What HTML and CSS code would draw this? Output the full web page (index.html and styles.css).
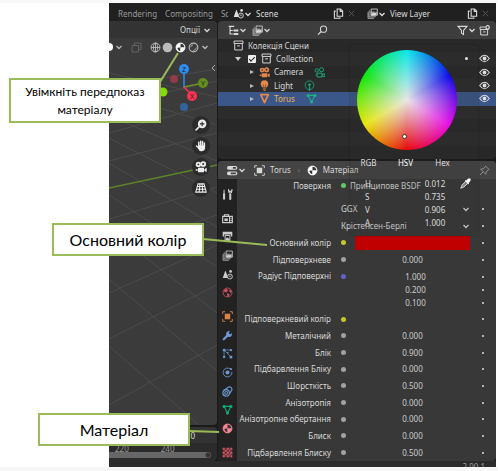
FILE: index.html
```html
<!DOCTYPE html>
<html lang="uk">
<head>
<meta charset="utf-8">
<title>Матеріал</title>
<link rel="stylesheet" href="styles.css">
</head>
<body>
<svg class="sprite" aria-hidden="true">
  <symbol id="chev" viewBox="0 0 8 8"><path d="M1.5 3 4 5.5 6.5 3" fill="none" stroke="currentColor" stroke-width="1.3"/></symbol>
  <symbol id="copy" viewBox="0 0 16 16"><path d="M6 1.5h5l3 3V12H6zM10.5 1.5V5H14M4 4.500H2V15h8v-1.500" fill="none" stroke="currentColor" stroke-width="1.600"/></symbol>
  <symbol id="cross" viewBox="0 0 16 16"><path d="M4 4l8 8M12 4l-8 8" fill="none" stroke="currentColor" stroke-width="1.400"/></symbol>
  <symbol id="scene" viewBox="0 0 16 16"><path d="M5 2 9 13H1z" fill="currentColor"/><circle cx="11.500" cy="11" r="3.600" fill="#303030" stroke="currentColor" stroke-width="1.300"/><circle cx="12.500" cy="3.500" r="2" fill="currentColor"/><path d="M10 10.500h3" stroke="currentColor"/></symbol>
  <symbol id="layers" viewBox="0 0 16 16"><path d="M6 1.500h9v9H6z" fill="none" stroke="currentColor" stroke-width="1.200"/><path d="M4 4H3v9h9v-1" fill="none" stroke="currentColor"/><path d="M1.500 6v9H10" fill="none" stroke="currentColor"/><path d="M5 5h7v7H5z" fill="currentColor" opacity=".55"/><path d="M6 10l3-4 2 2 3-3v5z" fill="currentColor"/></symbol>
  <symbol id="tree" viewBox="0 0 16 16"><path d="M1 2h8M3 3v10h4M3 8h4" fill="none" stroke="currentColor" stroke-width="1.600"/><path d="M8 8h7M8 13h7" stroke="currentColor" stroke-width="3"/></symbol>
  <symbol id="search" viewBox="0 0 16 16"><circle cx="9.500" cy="6" r="4.500" fill="none" stroke="currentColor" stroke-width="1.500"/><path d="M6 9.500 1.500 14" stroke="currentColor" stroke-width="1.800"/></symbol>
  <symbol id="filter" viewBox="0 0 16 16"><path d="M1.500 2h13L9.500 8v6L6.500 12V8z" fill="none" stroke="currentColor" stroke-width="1.500"/></symbol>
  <symbol id="box" viewBox="0 0 16 16"><path d="M1.500 1.500h13v3.500h-13zM2.500 5v9.500h11V5M6 8.500h4" fill="none" stroke="currentColor" stroke-width="1.400"/></symbol>
  <symbol id="newbox" viewBox="0 0 16 16"><path d="M9 3H1.500v3.500H14M2.500 6.500v8h10v-8M6 10h3.500" fill="none" stroke="currentColor" stroke-width="1.400"/><circle cx="12.500" cy="3.500" r="2.500" fill="none" stroke="currentColor" stroke-width="1.800"/></symbol>
  <symbol id="camera" viewBox="0 0 16 16"><circle cx="4.500" cy="4.500" r="3.500" fill="currentColor"/><circle cx="11" cy="4" r="3.800" fill="currentColor"/><circle cx="4.500" cy="4.500" r="1.200" fill="#333"/><circle cx="11" cy="4" r="1.400" fill="#333"/><path d="M4 9h8v6H4zM12.500 11 15.500 9v6l-3-2zM3.500 11H1v2h2.500z" fill="currentColor"/></symbol>
  <symbol id="camdata" viewBox="0 0 16 16"><circle cx="4" cy="5" r="2.500" fill="none" stroke="currentColor" stroke-width="1.300"/><circle cx="11" cy="4" r="3" fill="none" stroke="currentColor" stroke-width="1.300"/><path d="M4.500 9h7v5.500h-7zM11.500 11 15 9.500v5L11.500 13M4.500 11.500H2" fill="none" stroke="currentColor" stroke-width="1.300"/></symbol>
  <symbol id="bulb" viewBox="0 0 16 16"><path d="M8 0.500a5.500 5.500 0 0 0-5.500 5.500c0 2 1.500 3 2.500 5h6c1-2 2.500-3 2.500-5A5.500 5.500 0 0 0 8 .5z" fill="currentColor"/><path d="M5.500 12.200h5v1.400h-5zM6.500 14.300h3v1.400h-3z" fill="currentColor"/><path d="M6 6.500 7 11M10 6.500 9 11" stroke="#333" stroke-width=".8"/></symbol>
  <symbol id="lightdata" viewBox="0 0 16 16"><circle cx="8" cy="7.500" r="6.300" fill="none" stroke="currentColor" stroke-width="1.100"/><circle cx="8" cy="7" r="1.800" fill="currentColor"/><path d="M8 9v7" stroke="currentColor" stroke-width="1.300"/></symbol>
  <symbol id="tri" viewBox="0 0 16 16"><path d="M2.500 2.500h11L8 14z" fill="none" stroke="currentColor" stroke-width="2.600" stroke-linejoin="round"/></symbol>
  <symbol id="mesh" viewBox="0 0 16 16"><path d="M3 3.500h10L8 13.500z" fill="none" stroke="currentColor" stroke-width="1.600"/><circle cx="3" cy="3.500" r="2.200" fill="currentColor"/><circle cx="13" cy="3.500" r="2.200" fill="currentColor"/><circle cx="8" cy="13" r="2.200" fill="currentColor"/></symbol>
  <symbol id="eye" viewBox="0 0 16 16"><path d="M1 8q7-9.500 14 0-7 9.500-14 0z" fill="none" stroke="currentColor" stroke-width="1.500"/><circle cx="8" cy="8" r="2.800" fill="currentColor"/></symbol>
  <symbol id="props" viewBox="0 0 16 16"><rect x="0" y="1.500" width="15" height="5.500" rx="2.500" fill="currentColor"/><rect x="0" y="9.500" width="15" height="5.500" rx="2.500" fill="currentColor"/><path d="M8.500 3h4.500v2.500H8.500zM5.500 11H13v2.500H5.500z" fill="#444"/></symbol>
  <symbol id="object" viewBox="0 0 16 16"><path d="M4 4h8v8H4z" fill="currentColor"/><path d="M1 4.500V1h3.500M11.500 1H15v3.500M15 11.500V15h-3.500M4.500 15H1v-3.500" fill="none" stroke="currentColor" stroke-width="1.300"/></symbol>
  <symbol id="material" viewBox="0 0 16 16"><circle cx="8" cy="8" r="6.500" fill="currentColor" stroke="currentColor" stroke-width="1.200"/><path d="M8 2.500A5.500 5.500 0 0 1 13.500 8H8zM3.500 8.500 8 8v5.500A5.500 5.500 0 0 1 3.500 8.500z" fill="#333"/><path d="M8 8h5.500A5.500 5.500 0 0 1 8 13.500z" fill="currentColor"/></symbol>
  <symbol id="pin" viewBox="0 0 16 16"><path d="M9.500 1.500 14.500 6.500 13 7 10.500 10.500 10 13.500 2.500 6 6 5.500 9 3zM6 10 1.500 14.500" fill="none" stroke="currentColor" stroke-width="1.300"/></symbol>
  <symbol id="dropper" viewBox="0 0 16 16"><path d="M10 2.500q3-3.500 5-1.500t-1.500 5l-1 1 .8.800-1.500 1.500-5-5L8.300 2.800l.8.800z" fill="currentColor"/><path d="M7.500 5.500 3 10l-2 5 5-2 4.500-4.500" fill="#888" stroke="currentColor" stroke-width="1"/></symbol>
  <symbol id="tool" viewBox="0 0 16 16"><path d="M3 1v7M12 8V6Q9 5 9.500 1L11 3.500h2L14.500 1Q15 5 12 6" fill="none" stroke="currentColor" stroke-width="1.500"/><path d="M3 7.500V14M12 8v6.500" stroke="currentColor" stroke-width="3" stroke-linecap="round"/></symbol>
  <symbol id="render" viewBox="0 0 16 16"><path d="M1 5h10v9H1zM11 5h4v9h-4M3.500 5V2.500h6V5" fill="none" stroke="currentColor" stroke-width="1.700"/><path d="M3.500 8h5v3.500h-5zM12 7.500h3v1h-3zM12 10.500h3v1h-3z" fill="currentColor"/></symbol>
  <symbol id="output" viewBox="0 0 16 16"><path d="M1 1h14v7h-2V5H3v3H1z" fill="currentColor"/><path d="M4.500 6.500h7V14h-7z" fill="none" stroke="currentColor" stroke-width="1.400"/><path d="M5 12l2.500-3 2 2 1.500-1v3H5z" fill="currentColor"/></symbol>
  <symbol id="world" viewBox="0 0 16 16"><circle cx="8" cy="8" r="6.500" fill="none" stroke="currentColor" stroke-width="1.300"/><path d="M3 4l4-1.500L9 5 6 8 3 7zM7 9l4 1-1 4H8zM11 3l3 3-1 3-2.500-2.500z" fill="currentColor"/></symbol>
  <symbol id="wrench" viewBox="0 0 16 16"><path d="M2.500 13.500 9 7" stroke="currentColor" stroke-width="3.400" stroke-linecap="round"/><path d="M14.500 4.500 12 6.500 9.700 4.300l2-2.700A4.400 4.400 0 1 0 14.500 4.500z" fill="currentColor"/></symbol>
  <symbol id="particles" viewBox="0 0 16 16"><path d="M3 3v10M3 3l9 9M3 3h10" fill="none" stroke="currentColor" stroke-width="1"/><circle cx="3" cy="3" r="2" fill="currentColor"/><circle cx="13" cy="3" r="1.700" fill="currentColor"/><circle cx="3" cy="13" r="1.700" fill="currentColor"/><circle cx="13" cy="13" r="2.200" fill="currentColor"/><circle cx="8.500" cy="7" r="1.200" fill="currentColor"/></symbol>
  <symbol id="physics" viewBox="0 0 16 16"><circle cx="8" cy="8" r="3" fill="currentColor"/><path d="M12 3A6.400 6.400 0 1 0 14.300 7" fill="none" stroke="currentColor" stroke-width="1.300"/><circle cx="13" cy="3" r="1.600" fill="currentColor"/></symbol>
  <symbol id="constraint" viewBox="0 0 16 16"><circle cx="6" cy="10" r="4.700" fill="none" stroke="currentColor" stroke-width="1.700"/><circle cx="6" cy="10" r="2" fill="none" stroke="currentColor" stroke-width="1.500"/><path d="M3 6 9.500 1.500q5-1 5 4L11 11" fill="none" stroke="currentColor" stroke-width="1.700"/></symbol>
  <symbol id="texture" viewBox="0 0 16 16"><path d="M1 1h14v14H1z" fill="currentColor" opacity=".35"/><path d="M1 1h3v3H1zM7 1h3v3H7zM12 1h3v3h-3zM4 4h3v3H4zM10 4h2v3h-2zM1 7h3v3H1zM7 7h3v3H7zM12 7h3v3h-3zM4 10h3v2H4zM10 10h2v2h-2zM1 12h3v3H1zM7 12h3v3H7zM12 12h3v3h-3z" fill="currentColor"/></symbol>
  <symbol id="wire" viewBox="0 0 16 16"><g fill="none" stroke="currentColor" stroke-width="1.300"><circle cx="8" cy="8" r="6.500"/><ellipse cx="8" cy="8" rx="3" ry="6.500"/><path d="M1.500 8h13M8 1.500v13"/></g></symbol>
  <symbol id="solid" viewBox="0 0 16 16"><circle cx="8" cy="8" r="7" fill="currentColor"/></symbol>
  <symbol id="rendered" viewBox="0 0 16 16"><circle cx="8" cy="8" r="6.300" fill="none" stroke="currentColor" stroke-width="1.600"/><path d="M3.500 8A5 5 0 0 1 8 3.500z" fill="currentColor"/><path d="M13 6.500A6 6 0 0 1 6.500 13z" fill="currentColor" opacity=".6"/></symbol>
  <symbol id="overlay" viewBox="0 0 16 16"><path d="M1.500 5h9.500v9.500H1.500zM5 5V1.500h9.500V11H11" fill="none" stroke="currentColor" stroke-width="1.400"/></symbol>
  <symbol id="hand" viewBox="0 0 16 16"><path d="M5 8V3M7.500 7V1.500M10 7V2M12.500 9V4M5 10.500 2 8" stroke="currentColor" stroke-width="1.900" stroke-linecap="round"/><path d="M4.200 7h9.200v4q-.5 4-5 4-3 0-4.500-4z" fill="currentColor"/></symbol>
  <symbol id="zoomin" viewBox="0 0 16 16"><circle cx="9.500" cy="6.500" r="5.700" fill="currentColor"/><path d="M9.500 3.500v6M6.500 6.500h6" stroke="#2c2c2c" stroke-width="1.500"/><path d="M5 11 1.500 14.500" stroke="currentColor" stroke-width="2.200" stroke-linecap="round"/></symbol>
  <symbol id="persp" viewBox="0 0 16 16"><path d="M4 2.500h8l3 11H1zM2.800 6h10.400M2 9.700h12M6.700 2.500 5.500 13.500M9.300 2.500l1.200 11" fill="none" stroke="currentColor" stroke-width="1.400"/></symbol>
</svg>

<main class="figure">
  <div class="app">
    <header class="topbar">
      <nav class="workspaces">
        <a href="#r">Rendering</a><a href="#c">Compositing</a><a href="#s">Sc</a>
      </nav>
      <div class="block">
        <svg class="ic"><use href="#scene"/></svg><svg class="chev"><use href="#chev"/></svg>
        <span class="name">Scene</span>
        <button aria-label="Нова сцена"><svg class="ic"><use href="#copy"/></svg></button>
        <button class="dim" aria-label="Вилучити сцену"><svg class="ic"><use href="#cross"/></svg></button>
      </div>
      <div class="block">
        <svg class="ic"><use href="#layers"/></svg><svg class="chev"><use href="#chev"/></svg>
        <span class="name">View Layer</span>
        <button aria-label="Новий шар"><svg class="ic"><use href="#copy"/></svg></button>
        <button class="dim" aria-label="Вилучити шар"><svg class="ic"><use href="#cross"/></svg></button>
      </div>
    </header>

    <div class="workspace">
      <div class="left">
        <section class="viewport">
          <svg class="scene3d" viewBox="0 0 108 406" preserveAspectRatio="xMinYMin slice">
            <g stroke="#4b4b4b" stroke-width="1" fill="none">
              <path d="M0 52 108 76M0 72 108 104M0 95 108 140M0 117 108 172M0 142 108 206M0 174 108 246M0 208 108 292M0 258 108 350M0 325 108 420"/>
              <path d="M0 66 108 48M0 84 108 60M0 112 108 82M0 140 108 112M0 198 108 166M0 232 108 194M0 272 108 224M0 318 108 264M0 384 108 324"/>
            </g>
            <path d="M0 167 108 144" stroke="#5d8527" stroke-width="1.300"/>
          </svg>
          <div class="options"><button>Опції<svg class="chev"><use href="#chev"/></svg></button></div>
          <div class="shading">
            <i class="half"></i>
            <svg class="chev"><use href="#chev"/></svg>
            <button class="off" aria-label="Рентген"><svg class="ic"><use href="#overlay"/></svg></button>
            <button aria-label="Каркас"><svg class="ic"><use href="#wire"/></svg></button>
            <button aria-label="Суцільне"><svg class="ic"><use href="#solid"/></svg></button>
            <button class="on" aria-label="Передпоказ матеріалу"><svg class="ic"><use href="#material"/></svg></button>
            <button aria-label="Рендер"><svg class="ic"><use href="#rendered"/></svg></button>
            <svg class="chev"><use href="#chev"/></svg>
          </div>
          <svg class="gizmo" viewBox="0 0 58 54">
            <path d="M26 9v21" stroke="#2e8cf5" stroke-width="1.500"/><path d="M26 29 45 25" stroke="#6b9420" stroke-width="1.500"/><path d="M26 29l9 9" stroke="#ff3352" stroke-width="1.500"/>
            <circle cx="16" cy="21" r="4" fill="#95384a"/><circle cx="26" cy="49" r="4" fill="#32639c"/><circle cx="5" cy="34" r="4.500" fill="#85dc00"/>
            <circle cx="26" cy="11" r="5" fill="#2e8cf5"/><circle cx="45" cy="25" r="5" fill="#648f1e"/><circle cx="34" cy="38" r="5" fill="#ff3352"/>
            <g font-family="Noto Sans" font-size="7" text-anchor="middle" fill="#222"><text x="26" y="14">Z</text><text x="45" y="28">Y</text><text x="34" y="41">X</text></g>
            <path d="M57 7l-3 3 3 3" fill="none" stroke="#aaa"/>
          </svg>
          <div class="navtools">
            <button aria-label="Масштаб"><svg class="big"><use href="#zoomin"/></svg></button>
            <button aria-label="Рух"><svg class="big"><use href="#hand"/></svg></button>
            <button aria-label="Камера"><svg class="big"><use href="#camera"/></svg></button>
            <button aria-label="Перспектива"><svg class="big"><use href="#persp"/></svg></button>
          </div>
        </section>
        <section class="timeline">
          <div class="frame">0</div>
          <div class="ruler"><span>220</span><span>240</span></div>
          <div class="scroll"></div>
        </section>
      </div>

      <div class="right">
        <section class="outliner">
          <header class="bar">
            <svg class="ic"><use href="#tree"/></svg><svg class="chev"><use href="#chev"/></svg>
            <svg class="ic second"><use href="#layers"/></svg><svg class="chev"><use href="#chev"/></svg>
            <span class="find"><svg class="ic"><use href="#search"/></svg></span>
            <svg class="ic"><use href="#filter"/></svg><svg class="chev"><use href="#chev"/></svg>
            <button aria-label="Нова колекція"><svg class="ic"><use href="#newbox"/></svg></button>
          </header>
          <ul class="tree">
            <li><svg class="ic root"><use href="#box"/></svg>Колекція Сцени</li>
            <li><i class="open"></i><input type="checkbox" checked aria-label="Collection"><svg class="ic"><use href="#box"/></svg><span>Collection</span><i class="active"></i><svg class="ic eye"><use href="#eye"/></svg></li>
            <li class="child"><i class="closed"></i><svg class="ic orange"><use href="#camera"/></svg><span>Camera</span><svg class="ic green"><use href="#camdata"/></svg><svg class="ic eye"><use href="#eye"/></svg></li>
            <li class="child"><i class="closed"></i><svg class="ic orange"><use href="#bulb"/></svg><span>Light</span><svg class="ic green"><use href="#lightdata"/></svg><svg class="ic eye"><use href="#eye"/></svg></li>
            <li class="child selected"><i class="closed"></i><svg class="ic orange"><use href="#tri"/></svg><span>Torus</span><svg class="ic green"><use href="#mesh"/></svg><svg class="ic eye"><use href="#eye"/></svg></li>
            <li></li><li></li><li></li><li></li>
          </ul>
        </section>

        <section class="properties">
          <header class="bar">
            <svg class="ic"><use href="#props"/></svg><svg class="chev"><use href="#chev"/></svg>
            <svg class="ic obj"><use href="#object"/></svg><span class="crumb">Torus</span><span class="sep">›</span>
            <svg class="ic white"><use href="#material"/></svg><span class="crumb">Матеріал</span>
            <button class="pin" aria-label="Закріпити"><svg class="ic"><use href="#pin"/></svg></button>
          </header>
          <div class="content">
            <nav class="tabs">
              <div class="group"><button aria-label="Інструмент"><svg class="ic"><use href="#tool"/></svg></button></div>
              <div class="group five">
                <button aria-label="Рендер"><svg class="ic"><use href="#render"/></svg></button>
                <button aria-label="Вивід"><svg class="ic"><use href="#output"/></svg></button>
                <button aria-label="Шар"><svg class="ic"><use href="#layers"/></svg></button>
                <button aria-label="Сцена"><svg class="ic"><use href="#scene"/></svg></button>
                <button class="red" aria-label="Світ"><svg class="ic"><use href="#world"/></svg></button>
              </div>
              <div class="group seven">
                <button class="orange" aria-label="Об'єкт"><svg class="ic"><use href="#object"/></svg></button>
                <button class="blue" aria-label="Модифікатори"><svg class="ic"><use href="#wrench"/></svg></button>
                <button class="blue" aria-label="Частинки"><svg class="ic"><use href="#particles"/></svg></button>
                <button class="blue" aria-label="Фізика"><svg class="ic"><use href="#physics"/></svg></button>
                <button class="blue" aria-label="Обмеження"><svg class="ic"><use href="#constraint"/></svg></button>
                <button class="green" aria-label="Дані"><svg class="ic"><use href="#mesh"/></svg></button>
                <button class="pink" aria-label="Матеріал"><svg class="ic"><use href="#material"/></svg></button>
              </div>
              <div class="group"><button class="red" aria-label="Текстура"><svg class="ic"><use href="#texture"/></svg></button></div>
            </nav>
            <form class="panel">
              <div class="row surface"><label for="surf">Поверхня</label><i class="socket lime"></i><button type="button" id="surf" class="shader">Принципове BSDF</button></div>
              <div class="row choice"><select aria-label="Розподіл"><option>GGX</option></select><svg class="chev"><use href="#chev"/></svg><i class="key"></i></div>
              <div class="row choice"><select aria-label="Метод"><option>Крістенсен-Берлі</option></select><svg class="chev"><use href="#chev"/></svg><i class="key"></i></div>
              <div class="row"><label for="base">Основний колір</label><i class="socket yellow"></i><button type="button" id="base" class="swatch"></button><i class="key"></i></div>
              <div class="row"><label for="sub">Підповерхневе</label><i class="socket"></i><input id="sub" value="0.000"><i class="key"></i></div>
              <div class="row triple"><label for="rad">Радіус Підповерхні</label><i class="socket violet"></i>
                <div class="stack"><input id="rad" value="1.000"><input aria-label="Радіус G" value="0.200"><input aria-label="Радіус B" value="0.100"></div>
                <div class="stack"><i class="key"></i><i class="key"></i><i class="key"></i></div></div>
              <div class="rows">
                <div class="row"><label for="subc">Підповерхневий колір</label><i class="socket yellow"></i><button type="button" id="subc" class="blank"></button><i class="key"></i></div>
                <div class="row"><label for="met">Металічний</label><i class="socket"></i><input id="met" value="0.000"><i class="key"></i></div>
                <div class="row"><label for="spec">Блік</label><i class="socket"></i><input id="spec" value="0.900"><i class="key"></i></div>
                <div class="row"><label for="tint">Підбарвлення Бліку</label><i class="socket"></i><input id="tint" value="0.000"><i class="key"></i></div>
                <div class="row"><label for="rough">Шорсткість</label><i class="socket"></i><input id="rough" value="0.500"><i class="key"></i></div>
                <div class="row"><label for="ani">Анізотропія</label><i class="socket"></i><input id="ani" value="0.000"><i class="key"></i></div>
                <div class="row"><label for="anir">Анізотропне обертання</label><i class="socket"></i><input id="anir" value="0.000"><i class="key"></i></div>
                <div class="row"><label for="sheen">Блиск</label><i class="socket"></i><input id="sheen" value="0.000"><i class="key"></i></div>
                <div class="row"><label for="sheent">Підбарвлення Блиску</label><i class="socket"></i><input id="sheent" value="0.500"><i class="key"></i></div>
              </div>
            </form>
          </div>
        </section>
        <aside class="picker">
          <div class="wheel"><i class="cursor"></i></div>
          <div class="modes"><button>RGB</button><button class="sel">HSV</button><button>Hex</button></div>
          <div class="channels">
            <label for="h">H</label><input id="h" value="0.012"><button aria-label="Піпетка"><svg class="ic"><use href="#dropper"/></svg></button>
            <label for="s">S</label><input id="s" value="0.735">
            <label for="v">V</label><input id="v" value="0.906">
            <label for="a">A</label><input id="a" value="1.000">
          </div>
        </aside>
      </div>
    </div>
    <footer class="status">2.90.1</footer>
  </div>

  <svg class="leaders" viewBox="0 0 498 471" aria-hidden="true"><path d="M160 82 178 53M203 239l64 6M189 431l30 1" fill="none" stroke="#9bbb59" stroke-width="2"/></svg>
  <p class="callout preview">Увімкніть передпоказ матеріалу</p>
  <p class="callout large color">Основний колір</p>
  <p class="callout large mat">Матеріал</p>
</main>
</body>
</html>
```
FILE: styles.css
```css
* { box-sizing: border-box; }
body { margin: 0; background: #f6f6f6; font: 8px/12px "Noto Sans", sans-serif; color: #d8d8d8; }
button, input, select { font: inherit; color: inherit; background: none; border: 0; padding: 0; margin: 0; border-radius: 0; min-width: 0; }
button { display: flex; align-items: center; justify-content: center; }
a { color: inherit; text-decoration: none; }
svg { display: block; flex: none; }
.sprite { position: absolute; width: 0; height: 0; }
.ic { width: 11px; height: 11px; }
.chev { width: 8px; height: 8px; }

.figure { position: relative; padding: 3px 2px 0 109px; background: linear-gradient(#f8f8f8 3px, #fff 3px); }
.app { background: #1a1a1a; overflow: hidden; }

.topbar { display: flex; align-items: center; height: 18px; background: #202020; padding-top: 3px; }
.workspaces { display: flex; gap: 8px; width: 119px; padding-left: 9px; color: #999; overflow: hidden; white-space: nowrap; }
.block { display: flex; align-items: center; flex: 1; padding: 0 4px 0 5px; color: #ddd; }
.block .name { flex: 1; padding-left: 4px; white-space: nowrap; }
.block button { width: 13px; }
.dim { color: #555; }

.workspace { display: flex; height: 440px; }
.left { display: flex; flex-direction: column; width: 108px; gap: 2px; }
.viewport { position: relative; flex: 1; background: #3b3b3b; border-radius: 0 4px 4px 0; overflow: hidden; }
.scene3d { position: absolute; inset: 0; width: 100%; height: 100%; }
.options { position: relative; display: flex; justify-content: flex-end; height: 17px; padding-right: 6px; background: #333; }
.options button { gap: 3px; }
.shading { position: relative; display: flex; align-items: center; justify-content: flex-end; gap: 2px; height: 18px; padding-right: 8px; color: #bbb; }
.shading .half { width: 4px; height: 8px; border-radius: 0 4px 4px 0; background: #fff; margin-right: auto; }
.shading .off { color: #666; padding: 0 6px; }
.shading .on { color: #fff; }
.gizmo { position: relative; width: 58px; height: 54px; margin: 2px 0 0 49px; }
.navtools { position: relative; display: flex; flex-direction: column; align-items: flex-end; gap: 3px; padding: 4px 7px 0 0; color: #eee; }
.navtools button { width: 18px; height: 18px; border-radius: 9px; background: #2b2b2b; }
.big { width: 12px; height: 12px; }
.timeline { height: 34px; background: #2b2b2b; border-radius: 0 4px 4px 0; overflow: hidden; }
.frame { height: 16px; padding: 3px 22px 0; text-align: right; background: #333; }
.ruler { display: flex; gap: 32px; height: 9px; padding-left: 6px; color: #999; overflow: hidden; }
.scroll { height: 6px; margin-right: 6px; border-radius: 0 3px 3px 0; background: radial-gradient(circle at calc(100% - 3px) 3px, #333 2px, #676767 3px); }

.right { position: relative; display: flex; flex-direction: column; gap: 2px; flex: 1; margin-left: 1px; }
.outliner, .properties { border-radius: 4px; overflow: hidden; }
.bar { display: flex; align-items: center; flex: none; height: 18px; padding: 0 6px 0 10px; background: #3d3d3d; }
.outliner { background: #282828; flex: none; }
.second { margin-left: 5px; }
.find { display: flex; justify-content: center; flex: 1; padding-right: 84px; }
.outliner .bar button { margin-left: 3px; }
.tree { display: grid; grid-auto-rows: 1fr; height: 120px; margin: 0; padding: 0; list-style: none; }
.tree li { display: flex; align-items: center; padding: 0 6px 0 15px; min-height: 0; }
.tree li:nth-child(even) { background: #2c2c2c; }
.tree .root { margin-right: 4px; }
.tree span { padding-left: 4px; }
.open { border: 3px solid transparent; border-top: 4px solid #ccc; border-bottom: 0; margin-right: 7px; margin-left: 2px; }
.tree input { appearance: none; width: 8px; height: 8px; margin-right: 5px; background: #eee; border-radius: 1px; }
.tree input::after { content: ""; display: block; width: 5px; height: 2px; margin: 2px 1px; border: solid #222; border-width: 0 0 1px 1px; rotate: -45deg; }
.active { width: 3px; height: 3px; border-radius: 2px; background: #fff; margin-left: auto; }
.active + .eye { margin-left: 11px; }
.eye { margin-left: auto; color: #ddd; }
.tree .child { padding-left: 32px; }
.closed { border: 2px solid transparent; border-left: 4px solid #bbb; border-right: 0; margin-right: 5px; }
.orange { color: #e0894a; }
.green { color: #19b284; margin-left: 11px; }
.tree .selected { background: #3b5689; }
.selected span { color: #f2b050; }

.properties { flex: 1; display: flex; flex-direction: column; background: #383838; }
.properties .bar { background: #444; padding-left: 9px; }
.obj { margin-left: 8px; }
.crumb { padding-left: 5px; }
.sep { width: 16px; text-align: center; color: #777; }
.white { color: #fff; }
.pin { margin-left: auto; color: #999; }
.content { display: flex; flex: 1; }
.tabs { display: flex; flex-direction: column; gap: 5px; width: 19px; padding-top: 6px; background: #222; }
.tabs .group { display: grid; grid-auto-rows: 1fr; height: 19px; }
.tabs .five { height: 93px; }
.tabs .seven { height: 131px; }
.tabs button { margin: 0; color: #ccc; }
.tabs .red { color: #c95361; }
.tabs .pink { color: #f58590; }
.tabs .orange { color: #d98446; }
.tabs .blue { color: #6f97d4; }
.tabs .green { color: #12ad7c; }

.panel { flex: 1; display: flex; flex-direction: column; margin: 0; }
.row { display: grid; grid-template-columns: 94px 24px 1fr 26px; align-items: center; height: 17px; min-height: 0; }
.row label { text-align: right; white-space: nowrap; justify-self: end; }
.row input { width: 100%; text-align: center; line-height: 12px; height: 12px; color: #ccc; }
.socket { justify-self: center; width: 5px; height: 5px; border-radius: 50%; background: #a1a1a1; }
.lime { background: #63c763; }
.yellow { background: #c7c729; }
.violet { background: #6363c7; }
.key { justify-self: center; width: 2px; height: 2px; border-radius: 1px; background: #ddd; }
.surface { height: 13px; margin-bottom: 8px; }
.shader { justify-content: flex-start; margin-left: -5px; white-space: nowrap; }
.choice { grid-template-columns: 1fr 8px 26px; padding-left: 104px; }
.choice select { appearance: none; }
.swatch { height: 14px; background: #c00000; }
.triple { height: 43px; align-items: start; }
.triple label { line-height: 16px; }
.triple .socket { margin-top: 6px; }
.stack { display: grid; grid-auto-rows: 13px; align-items: center; padding-top: 2px; }
.stack input { padding-left: 6px; }
.rows { display: grid; grid-auto-rows: 1fr; height: 150px; }
.rows .row { height: auto; }

.picker { position: absolute; top: 24px; right: 18px; width: 128px; height: 191px; padding-top: 5px; border-radius: 3px; background: rgba(48, 48, 48, .15); box-shadow: 0 0 2px rgba(0, 0, 0, .35); color: #ddd; }
.wheel { position: relative; width: 100px; height: 100px; margin-left: 7px; border-radius: 50%; background: radial-gradient(closest-side, #e7e7e7, rgba(231, 231, 231, 0)), conic-gradient(from 180deg, #e70808, #e7e708, #08e708, #08e7e7, #0808e7, #e708e7, #e70808); }
.cursor { position: absolute; left: 45px; top: 84px; width: 5px; height: 5px; border: 1px solid #333; border-radius: 50%; background: #fff; }
.modes { display: grid; grid-template-columns: repeat(3, 37px); padding: 7px 0 8px; }
.modes .sel { color: #fff; }
.channels { display: grid; grid-template-columns: 68px 1fr 26px; grid-auto-rows: 13px; align-items: center; }
.channels label { grid-column: 1; padding-left: 15px; }
.channels input { width: 100%; text-align: center; height: 12px; }
.channels button { color: #fff; }

.status { height: 6px; padding-right: 11px; overflow: hidden; text-align: right; background: #2b2b2b; color: #999; }
.leaders { position: absolute; left: 0; top: 0; width: 498px; height: 471px; pointer-events: none; }
.callout { position: absolute; display: flex; align-items: center; justify-content: center; margin: 0; width: 152px; border: 2px solid #9bbb59; background: #fff; color: #000; font: 12px/18px Lato, "Open Sans", sans-serif; text-align: center; }
.large { height: 33px; font-size: 16px; }
.preview { left: 9px; top: 78px; height: 45px; padding: 0 8px; }
.color { left: 52px; top: 223px; }
.mat { left: 38px; top: 413px; }
```
